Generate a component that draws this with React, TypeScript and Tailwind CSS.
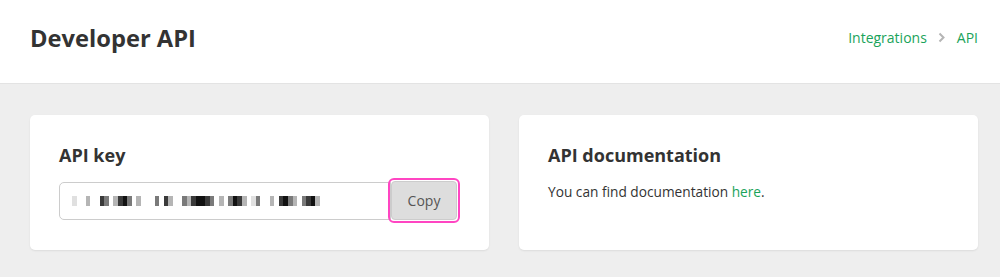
import React from 'react';

// grey levels for the pixelated (redacted) key, 0 = blank, higher = darker
const KEY_CELLS = [
  1, 0, 0, 2, 0, 0, 4, 3, 0, 2, 4, 5, 3, 0, 2, 0, 0, 0, 3, 0, 4, 2, 0, 0, 3, 2, 4, 5, 5, 4, 3, 0, 2, 0,
  3, 5, 4, 2, 0, 1, 3, 0, 0, 2, 0, 4, 5, 3, 2, 0, 3, 4, 5, 2,
];

const SHADES = ['bg-transparent', 'bg-[#e0e0e0]', 'bg-[#b5b5b5]', 'bg-[#7a7a7a]', 'bg-[#3a3a3a]', 'bg-[#111111]'];

const RedactedKey: React.FC = () => (
  <div className="flex items-center h-[10px]">
    {KEY_CELLS.map((s, i) => (
      <div key={i} className={`w-[4.6px] h-[10px] ${SHADES[s]}`} />
    ))}
  </div>
);

const Card: React.FC<{ title: string; children: React.ReactNode }> = ({ title, children }) => (
  <div className="bg-white rounded-[5px] shadow-[0_1px_2px_rgba(0,0,0,0.08)] h-[135px] px-[29px] pt-[27px]">
    <h2 className="text-[18px] font-bold text-[#333333] leading-[26px]">{title}</h2>
    {children}
  </div>
);

export default function App() {
  return (
    <div className="min-h-[277px] bg-[#eeeeee] font-['Open_Sans',sans-serif] text-[#333333]">
      {/* header */}
      <div className="h-[84px] bg-white border-b border-[#e3e3e3] flex items-center justify-between pl-[30px] pr-[22px]">
        <h1 className="text-[23.7px] font-bold text-[#333333] leading-none -mt-[6px]">Developer API</h1>
        <div className="flex items-center gap-[11px] text-[14px] text-[#1aa35a] -mt-[8px]">
          <span>Integrations</span>
          <svg width="8" height="11" viewBox="0 0 8 11" className="text-[#b5b5b5]">
            <path d="M1.5 1.5 L5.5 5.5 L1.5 9.5" stroke="currentColor" strokeWidth="2" fill="none" />
          </svg>
          <span>API</span>
        </div>
      </div>

      {/* cards */}
      <div className="grid grid-cols-2 gap-[30px] pl-[30px] pr-[22px] pt-[31px]">
        <Card title="API key">
          <div className="mt-[10px] flex items-center">
            <div className="w-[334px] h-[38px] border border-[#cccccc] rounded-l-[5px] flex items-center pl-[12px] bg-white">
              <RedactedKey />
            </div>
            <div className="rounded-[6px] border-2 border-[#ff45c2] p-[1px] -ml-[3px]">
              <button className="w-[66px] h-[39px] bg-[#dddddd] border border-[#cccccc] rounded-[4px] text-[14px] text-[#555555]">
                Copy
              </button>
            </div>
          </div>
        </Card>
        <Card title="API documentation">
          <p className="mt-[14px] text-[13.7px] text-[#333333]">
            You can find documentation <span className="text-[#1aa35a]">here</span>.
          </p>
        </Card>
      </div>
    </div>
  );
}
